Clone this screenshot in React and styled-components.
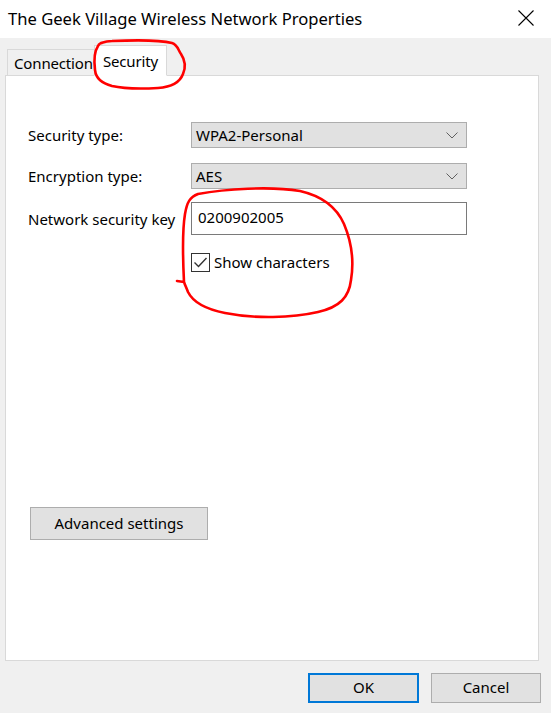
import React from "react";
import styled, { createGlobalStyle } from "styled-components";

const GlobalStyle = createGlobalStyle`
  html, body { margin: 0; padding: 0; background: #f0f0f0; }
  body { font-family: "Segoe UI", "Noto Sans", "Open Sans", sans-serif; color: #000; }
  * { box-sizing: border-box; }
`;

const Window = styled.div`
  position: relative;
  width: 551px;
  height: 713px;
  display: flex;
  flex-direction: column;
  background: #f0f0f0;
  overflow: hidden;
`;

const TitleBar = styled.div`
  height: 39px;
  background: #fff;
  display: flex;
  align-items: center;
  justify-content: space-between;
  padding: 0 17px 2px 8px;
`;

const Title = styled.div`
  font-size: 16.6px;
  color: #000;
`;

const CloseIcon = styled.svg`
  width: 16px;
  height: 16px;
  display: block;
`;

const Body = styled.div`
  flex: 1;
  display: flex;
  flex-direction: column;
  padding: 6px 10px 10px 5px;
`;

const TabStrip = styled.div`
  display: flex;
  align-items: flex-end;
  padding-left: 2px;
  height: 32px;
  margin-bottom: -1px;
  position: relative;
  z-index: 1;
`;

const Tab = styled.div`
  height: ${(p) => (p.$active ? "31px" : "27px")};
  padding: ${(p) => (p.$active ? "0 8px 0 8px" : "0 2px 0 6px")};
  margin-right: ${(p) => (p.$active ? "0" : "-2px")};
  background: ${(p) => (p.$active ? "#fff" : "#f0f0f0")};
  border: 1px solid #d9d9d9;
  border-bottom: ${(p) => (p.$active ? "1px solid #fff" : "1px solid #d9d9d9")};
  display: flex;
  align-items: center;
  font-size: 15px;
  letter-spacing: -0.15px;
  position: relative;
  z-index: ${(p) => (p.$active ? 2 : 1)};
`;

const Panel = styled.div`
  width: 534px;
  height: 586px;
  background: #fff;
  border: 1px solid #d9d9d9;
  padding: 46px 0 0 22px;
  display: flex;
  flex-direction: column;
`;

const FieldRow = styled.div`
  display: grid;
  grid-template-columns: 163px 276px;
  align-items: center;
  margin-bottom: ${(p) => p.$gap}px;
`;

const Label = styled.div`
  font-size: 15px;
  white-space: nowrap;
`;

const Select = styled.div`
  height: 26px;
  background: #e1e1e1;
  border: 1px solid #adadad;
  display: flex;
  align-items: center;
  justify-content: space-between;
  padding: 0 4px 0 4px;
  font-size: 15px;
`;

const Chevron = styled.svg`
  width: 12px;
  height: 7px;
  margin-right: 4px;
  display: block;
`;

const TextInput = styled.div`
  height: 33px;
  background: #fff;
  border: 1px solid #7a7a7a;
  display: flex;
  align-items: center;
  padding: 0 0 4px 6px;
  font-size: 15px;
`;

const CheckRow = styled.label`
  display: flex;
  align-items: center;
  gap: 4px;
  margin-left: 163px;
  font-size: 15px;
`;

const CheckBox = styled.span`
  width: 19px;
  height: 19px;
  border: 1px solid #333;
  background: #fff;
  display: flex;
  align-items: center;
  justify-content: center;
`;

const Button = styled.div`
  width: ${(p) => p.$w}px;
  height: ${(p) => p.$h}px;
  background: #e1e1e1;
  border: ${(p) => (p.$primary ? "2px solid #0078d7" : "1px solid #adadad")};
  display: flex;
  align-items: center;
  justify-content: center;
  font-size: 15px;
  padding-bottom: 2px;
`;

const AdvancedWrap = styled.div`
  margin-top: 235px;
  margin-left: 2px;
`;

const Footer = styled.div`
  display: flex;
  justify-content: flex-end;
  gap: 12px;
  margin-top: 12px;
`;

const Annotations = styled.svg`
  position: absolute;
  left: 0;
  top: 0;
  width: 551px;
  height: 713px;
  pointer-events: none;
  z-index: 5;
`;

const ChevronIcon = () => (
  <Chevron viewBox="0 0 12 7">
    <path d="M0.5 0.5 L6 6 L11.5 0.5" fill="none" stroke="#606060" strokeWidth="1" />
  </Chevron>
);

export default function App() {
  return (
    <>
      <GlobalStyle />
      <Window>
        <TitleBar>
          <Title>The Geek Village Wireless Network Properties</Title>
          <CloseIcon viewBox="0 0 16 16">
            <path d="M0.5 0.5 L15.5 15.5 M15.5 0.5 L0.5 15.5" stroke="#000" strokeWidth="1.1" fill="none" />
          </CloseIcon>
        </TitleBar>
        <Body>
          <TabStrip>
            <Tab>Connection</Tab>
            <Tab $active>Security</Tab>
          </TabStrip>
          <Panel>
            <FieldRow $gap={15}>
              <Label>Security type:</Label>
              <Select>
                <span>WPA2-Personal</span>
                <ChevronIcon />
              </Select>
            </FieldRow>
            <FieldRow $gap={13}>
              <Label>Encryption type:</Label>
              <Select>
                <span>AES</span>
                <ChevronIcon />
              </Select>
            </FieldRow>
            <FieldRow $gap={17}>
              <Label>Network security key</Label>
              <TextInput>0200902005</TextInput>
            </FieldRow>
            <CheckRow>
              <CheckBox>
                <svg width="15" height="13" viewBox="0 0 15 13">
                  <path d="M1.5 6.5 L5.5 10.5 L13.5 2" fill="none" stroke="#333" strokeWidth="1.4" />
                </svg>
              </CheckBox>
              Show characters
            </CheckRow>
            <AdvancedWrap>
              <Button $w={178} $h={33}>Advanced settings</Button>
            </AdvancedWrap>
          </Panel>
          <Footer>
            <Button $w={111} $h={30} $primary>OK</Button>
            <Button $w={110} $h={30}>Cancel</Button>
          </Footer>
        </Body>
        <Annotations viewBox="0 0 551 713">
          <g fill="none" stroke="#ff0000" strokeWidth="2.6" strokeLinecap="round" strokeLinejoin="round">
            <path d="M101 43 C104 42, 108 41, 112 41 C135 40, 160 40, 172 43 C178 45, 178 50, 181 54 C185 60, 186 67, 183 74 C180 82, 172 87, 158 88 C140 89, 125 89, 112 86 C102 83, 96 79, 95 70 C94 62, 94 52, 98 46 C99 44, 101 43, 102 43" />
            <path d="M177 281 L184 282 C183 262, 182 232, 185 214 C187 202, 190 197, 198 194 C225 189, 270 186, 300 191 C322 196, 336 206, 344 224 C352 243, 354 262, 351 280 C349 297, 340 307, 318 312 C292 318, 255 319, 225 313 C205 309, 193 302, 188 292 C186 287, 185 285, 184 282" />
          </g>
        </Annotations>
      </Window>
    </>
  );
}
